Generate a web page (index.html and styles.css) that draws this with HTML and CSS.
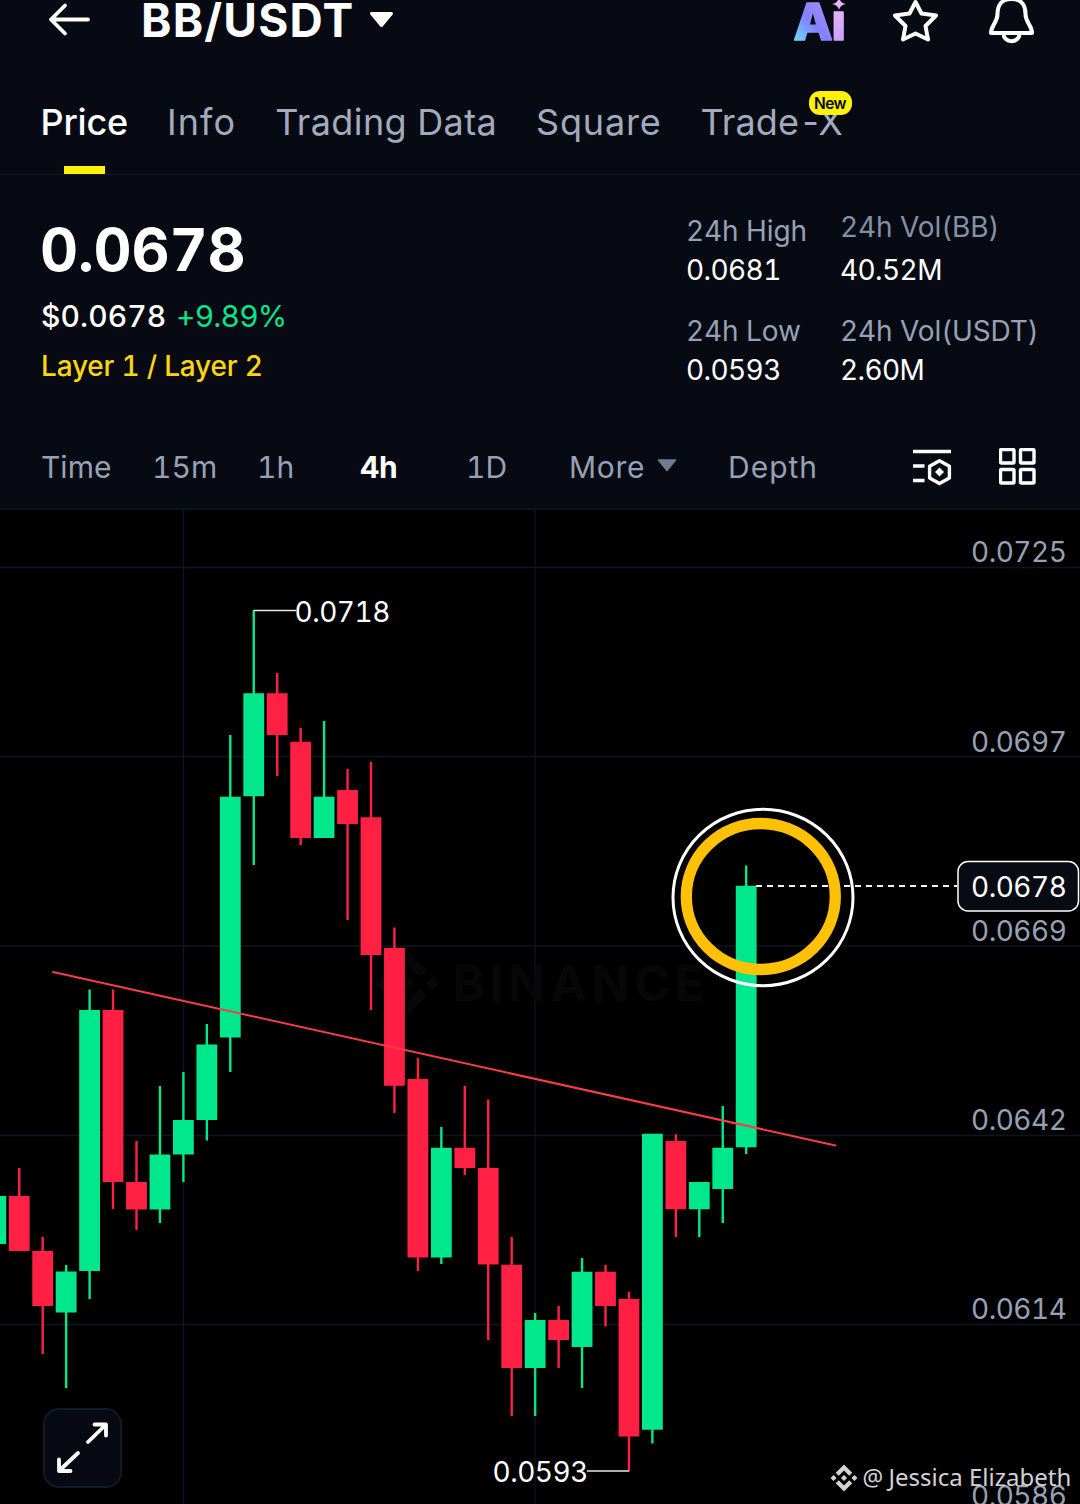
FILE: index.html
```html
<!DOCTYPE html>
<html lang="en">
<head>
<meta charset="utf-8">
<title>BB/USDT</title>
<link rel="stylesheet" href="styles.css">
</head>
<body>
<div class="app">
  <header class="topbar">
    <svg class="back" width="44" height="40" viewBox="48 0 44 40"><path d="M88 19.5H51M65 5.5L51 19.5L65 33.5"/></svg>
    <h1 class="pair">BB/USDT</h1>
    <svg class="caret" width="26" height="18" viewBox="368 10 26 18"><path d="M371.5 13.5H391.500L381.500 25.500Z"/></svg>
    <div class="actions">
      <svg width="56" height="44" viewBox="792 0 56 44">
        <defs>
          <linearGradient id="ga" gradientUnits="userSpaceOnUse" x1="795" y1="38" x2="828" y2="8"><stop offset="0" stop-color="#70d2ff"/><stop offset=".5" stop-color="#8480ff"/><stop offset="1" stop-color="#a48dff"/></linearGradient>
          <linearGradient id="gi" x1="0" y1="0" x2="0" y2="1"><stop offset="0" stop-color="#f0bdf0"/><stop offset="1" stop-color="#c39bff"/></linearGradient>
        </defs>
        <text class="ai" x="793.5" y="40" fill="url(#ga)" stroke="url(#ga)">A</text>
        <text class="ai" x="831.500" y="40" fill="url(#gi)" stroke="url(#gi)">ı</text>
        <path d="M839-3Q840 3 846 4Q840 5 839 10Q838 5 832 4Q838 3 839-3Z" fill="#e6b4f4"/>
      </svg>
      <svg class="line-icon star" width="47" height="44" viewBox="892 0 47 44"><path d="M915.5 2L921.5 13.5L936 15.500L925.500 26L928 39.500L915.500 33.500L903 39.500L905.500 26L895 15.500L909.500 13.500Z"/></svg>
      <svg class="line-icon bell" width="47" height="44" viewBox="988 0 47 44"><path d="M1011.500-1C1001-1 997.500 6 997.500 14C997.500 23 991 25 991 33H1032C1032 25 1025.500 23 1025.500 14C1025.500 6 1022-1 1011.500-1ZM1003.500 34a8 7.200 0 0 0 16 0"/></svg>
    </div>
  </header>

  <nav class="tabs">
    <a class="tab tab-on">Price</a>
    <a class="tab tab-info">Info</a>
    <a class="tab tab-data">Trading Data</a>
    <a class="tab tab-square">Square</a>
    <a class="tab tab-tradex">Trade<span class="suffix">-X</span><span class="badge">New</span></a>
  </nav>

  <section class="summary">
    <div class="quote">
      <div class="last">0.0678</div>
      <div class="fiat"><span class="usd">$0.0678</span><span class="chg">+9.89%</span></div>
      <div class="layer">Layer 1 / Layer 2</div>
    </div>
    <dl class="stats">
      <div class="stat"><dt>24h High</dt><dd>0.0681</dd></div>
      <div class="stat"><dt>24h Low</dt><dd>0.0593</dd></div>
    </dl>
    <dl class="stats stats-vol">
      <div class="stat stat-bb"><dt>24h Vol(BB)</dt><dd>40.52M</dd></div>
      <div class="stat"><dt>24h Vol(USDT)</dt><dd>2.60M</dd></div>
    </dl>
  </section>

  <div class="frames">
    <span>Time</span><span>15m</span><span>1h</span><span class="frame-on">4h</span><span>1D</span>
    <span class="more">More <svg width="20" height="13" viewBox="0 0 20 13"><path d="M1.500 1H18.500L10 11.500Z"/></svg></span>
    <span class="depth">Depth</span>
    <span class="tools">
      <svg class="line-icon" width="39" height="38" viewBox="913 448 39 38"><path class="sq" d="M913 451.500H951M913 466H924.500M913 480.500H924.500"/><path d="M939.500 460.700L949.400 466.300V477.900L939.500 483.500L929.600 477.900V466.300Z"/><path class="solid" d="M939.500 467.500L944 472L939.500 476.500L935 472Z"/></svg>
      <svg class="line-icon" width="37" height="37" viewBox="999 448 37 37"><rect x="1000.500" y="449.500" width="13.500" height="13.500" rx="1"/><rect x="1020.500" y="449.500" width="13.500" height="13.500" rx="1"/><rect x="1000.500" y="469.500" width="13.500" height="13.500" rx="1"/><rect x="1020.500" y="469.500" width="13.500" height="13.500" rx="1"/></svg>
    </span>
  </div>

  <main class="chart">
    <svg class="plot" width="1080" height="994" viewBox="0 510 1080 994">
      <defs>
        <path id="mark" d="M16.624 13.9202l2.7175 2.7154-7.353 7.353-7.353-7.352 2.7175-2.7164 4.6355 4.6595 4.6356-4.6595zm4.6366-4.6366L24 12l-2.7154 2.7164L18.5682 12l2.6924-2.7164zm-9.272.001l2.7163 2.6914-2.7164 2.7174v-.001L9.2721 12l2.7164-2.7154zm-9.2722-.001L5.4088 12l-2.6914 2.6924L0 12l2.7164-2.7164zM11.9885.0115l7.353 7.329-2.7174 2.7154-4.6356-4.6356-4.6355 4.6595-2.7174-2.7154 7.353-7.353z"/>
      </defs>
      <path class="grid" d="M0 567.500H1080M0 756.500H1080M0 946H1080M0 1135.500H1080M0 1324.500H1080M183.500 510V1504M535 510V1504"/>
      <g class="brand"><use href="#mark" transform="translate(375 951) scale(2.700)"/><text x="452.500" y="1001">BINANCE</text></g>
      <g id="candles"></g>
      <path class="leader" d="M254 610.500H296M587 1471H629"/>
      <path class="last-line" d="M756 886H957"/>
      <path class="trend" d="M53 972L835.500 1145.500"/>
      <ellipse class="ring-outer" cx="763" cy="897.500" rx="90" ry="88.200"/>
      <ellipse class="ring-inner" cx="760.800" cy="896.500" rx="74.500" ry="73"/>
      <g class="axis">
        <text x="971" y="562">0.0725</text><text x="971" y="752">0.0697</text><text x="971" y="941">0.0669</text><text x="971" y="1130">0.0642</text><text x="971" y="1319">0.0614</text><text x="971" y="1506">0.0586</text>
      </g>
      <rect class="tag" x="958" y="861.500" width="120.500" height="49.500" rx="10"/>
      <g class="values"><text x="971" y="897">0.0678</text><text x="294.500" y="622">0.0718</text><text x="492.500" y="1481.500">0.0593</text></g>
      <g class="author"><use href="#mark" transform="translate(830.500 1464.500) scale(1.125)"/><text class="at" x="862.500" y="1486">@</text><text x="888.500" y="1486">Jessica Elizabeth</text></g>
    </svg>
    <button class="expand" aria-label="Expand"><svg width="54" height="54" viewBox="56 1421.500 54 54"><path d="M88 1442.500L105.500 1425.500M94.500 1425H106V1436M78 1453.500L60 1470.500M59 1460V1471.500H70.500"/></svg></button>
  </main>
</div>
<script src="chart.js"></script>
</body>
</html>
```
FILE: styles.css
```css
* { box-sizing: border-box; }
body {
  margin: 0;
  background: #070a12;
  color: #fff;
  font-family: Inter, sans-serif;
  font-variant-numeric: tabular-nums;
}
.app { width: 1080px; height: 1504px; overflow: hidden; display: flex; flex-direction: column; }
svg { display: block; }

.topbar { height: 76px; flex: none; display: flex; align-items: flex-start; padding: 0 45px 0 48px; }
.back path { fill: none; stroke: #fff; stroke-width: 3.8; stroke-linecap: round; stroke-linejoin: round; }
.pair { margin: 0 0 0 48px; width: 228px; font-size: 46px; line-height: 41px; font-weight: 700; letter-spacing: 1.2px; padding-left: 1px; }
.caret { margin-top: 10px; fill: #fff; stroke: #fff; stroke-width: 3; stroke-linejoin: round; }
.actions { margin-left: auto; display: flex; }
.ai { font-size: 51px; font-weight: 800; stroke-width: 1.5; stroke-linejoin: round; }
.star { margin-left: 44px; }
.bell { margin-left: 49px; }
.line-icon { fill: none; stroke: #fff; stroke-width: 3.4; stroke-linejoin: round; stroke-linecap: round; }
.star, .bell { stroke-width: 4; }
.sq { stroke-linecap: butt; }
.solid { fill: #fff; stroke: none; }

.tabs { height: 99px; flex: none; display: flex; gap: 39px; padding-left: 40.5px; border-bottom: 1px solid #131720; }
.tab { position: relative; font-size: 36px; line-height: 92px; color: #a1abbd; white-space: nowrap; }
.tab-on { color: #fff; font-weight: 500; letter-spacing: -.2px; }
.tab-on::after { content: ""; position: absolute; left: 23.5px; bottom: 0; width: 41px; height: 8px; background: #fff20a; }
.tab-info { letter-spacing: 1.1px; }
.tab-data { letter-spacing: .4px; }
.tab-square { letter-spacing: .8px; }
.tab-tradex { letter-spacing: .1px; }
.suffix { letter-spacing: -4px; }
.badge {
  position: absolute; left: 108px; top: 15px; width: 43px; height: 24px; border-radius: 11px;
  background: #fff20a; color: #07080c; font-size: 15.5px; line-height: 25px; font-weight: 600;
  letter-spacing: -.5px; text-align: center;
}

.summary { height: 251px; flex: none; display: flex; padding: 38px 0 0 40px; }
.quote { width: 646px; }
.last { font-size: 59px; line-height: 74px; font-weight: 700; letter-spacing: -.2px; }
.fiat { margin-top: 11px; font-size: 30px; line-height: 37px; display: flex; }
.usd { width: 136px; font-weight: 500; letter-spacing: .1px; padding-left: 1px; }
.chg { color: #07e48a; letter-spacing: -.8px; }
.layer { margin-top: 13px; font-size: 28px; line-height: 36px; font-weight: 500; letter-spacing: -.2px; padding-left: 1px; color: #fcd60a; }
.stats { width: 154px; margin: 0; display: flex; flex-direction: column; gap: 25px; font-size: 28px; line-height: 36px; white-space: nowrap; letter-spacing: -.1px; }
.stats-vol { width: 230px; margin-top: -4px; }
.stat { display: flex; flex-direction: column; gap: 3px; }
.stat-bb { gap: 7px; }
.stat dt { color: #96a1b5; }
.stat-bb dt { color: #8490a5; }
.stat dd { margin: 0; letter-spacing: -.6px; }

.frames {
  height: 84px; flex: none; display: grid; align-items: center; padding: 0 44px 0 41px;
  grid-template-columns: 111px 105px 103px 106px 103px 159px 120px 1fr;
  border-bottom: 2px solid #0c121c; font-size: 30px; color: #96a1b5;
}
.frame-on { color: #fff; font-weight: 700; margin-top: -1px; letter-spacing: -.4px; }
.more { display: flex; align-items: center; gap: 12px; letter-spacing: .7px; }
.more svg { fill: #6f7b90; stroke: #6f7b90; stroke-width: 1.5; stroke-linejoin: round; margin-bottom: 4px; }
.depth { letter-spacing: 1px; }
.tools { display: flex; justify-content: flex-end; gap: 47px; }

.chart { position: relative; flex: 1; background: #000; }
.grid { fill: none; stroke: #0f1620; stroke-width: 1.3; }
.brand { fill: #070707; }
.brand text { font-size: 49px; font-weight: 700; letter-spacing: 4.8px; }
.up { fill: #00e88b; }
.down { fill: #ff2044; }
.leader { stroke: #e8e8e8; stroke-width: 1.7; }
.last-line { stroke: #f2f2f2; stroke-width: 2; stroke-dasharray: 6 5; }
.trend { stroke: #f73d46; stroke-width: 2; stroke-linecap: round; }
.ring-outer { fill: none; stroke: #fff; stroke-width: 3; }
.ring-inner { fill: none; stroke: #ffc106; stroke-width: 11.3; }
.axis { fill: #96a1b5; font-size: 28px; letter-spacing: -.5px; }
.values { fill: #fff; font-size: 28px; letter-spacing: -.5px; }
.tag { fill: #080b13; stroke: #fff; stroke-width: 1.5; }
.author { fill: #d2d2d2; font: 24px "Noto Sans", sans-serif; }
.at { font-size: 23px; }
.expand {
  position: absolute; left: 43px; top: 898px; width: 79px; height: 80px; padding: 0;
  display: flex; align-items: center; justify-content: center;
  background: #070a12; border: 2px solid #131a27; border-radius: 16px;
}
.expand path { fill: none; stroke: #fff; stroke-width: 3.8; stroke-linecap: round; stroke-linejoin: round; }
```
FILE: chart.js
```js
// Each candle: direction (1 up, 0 down), wick top, body top, body bottom, wick bottom.
const candles = [
  [1, 1196, 1196, 1244, 1244],
  [0, 1168, 1196, 1251, 1251],
  [0, 1237, 1251, 1306, 1354],
  [1, 1265, 1271.5, 1312.5, 1388],
  [1, 989.5, 1010, 1271, 1299],
  [0, 989.5, 1010, 1182, 1209],
  [0, 1141, 1182, 1209.5, 1230],
  [1, 1086, 1154.5, 1209.5, 1223],
  [1, 1072, 1120, 1154.5, 1182],
  [1, 1024, 1044.5, 1120, 1140.5],
  [1, 735, 796.7, 1037.5, 1072],
  [1, 610, 693.3, 796.3, 865],
  [0, 673, 693.3, 735, 776],
  [0, 728, 741.7, 838, 845],
  [1, 721, 796.7, 838, 838],
  [0, 769, 790, 824, 920],
  [0, 762, 817.3, 955, 1010],
  [0, 927.5, 948, 1085.7, 1113],
  [0, 1058, 1079, 1257.5, 1271],
  [1, 1127, 1147.7, 1257.5, 1264],
  [0, 1086, 1147.7, 1168, 1175],
  [0, 1099.5, 1168, 1264.5, 1340],
  [0, 1237, 1264.8, 1368, 1416],
  [1, 1313, 1320, 1368, 1416],
  [0, 1306, 1320, 1340, 1368],
  [1, 1258, 1271.7, 1347, 1388],
  [0, 1265, 1271.7, 1306, 1326.5],
  [0, 1292, 1299, 1436.5, 1471],
  [1, 1133.8, 1133.8, 1429.7, 1443.5],
  [0, 1134.3, 1141, 1209.3, 1237],
  [1, 1182, 1182, 1209.3, 1237],
  [1, 1106, 1147.7, 1189, 1223],
  [1, 865.5, 885.7, 1147.3, 1154]
];
const step = 23.45;
const firstX = -4.2;
document.getElementById('candles').innerHTML = candles.map(([up, high, top, bottom, low], i) => {
  const x = firstX + i * step;
  return `<path class="${up ? 'up' : 'down'}" d="M${x - 10.4} ${top}H${x + 10.4}V${bottom}H${x - 10.4}ZM${x - 1.2} ${high}H${x + 1.2}V${low}H${x - 1.2}Z"/>`;
}).join('');
```
